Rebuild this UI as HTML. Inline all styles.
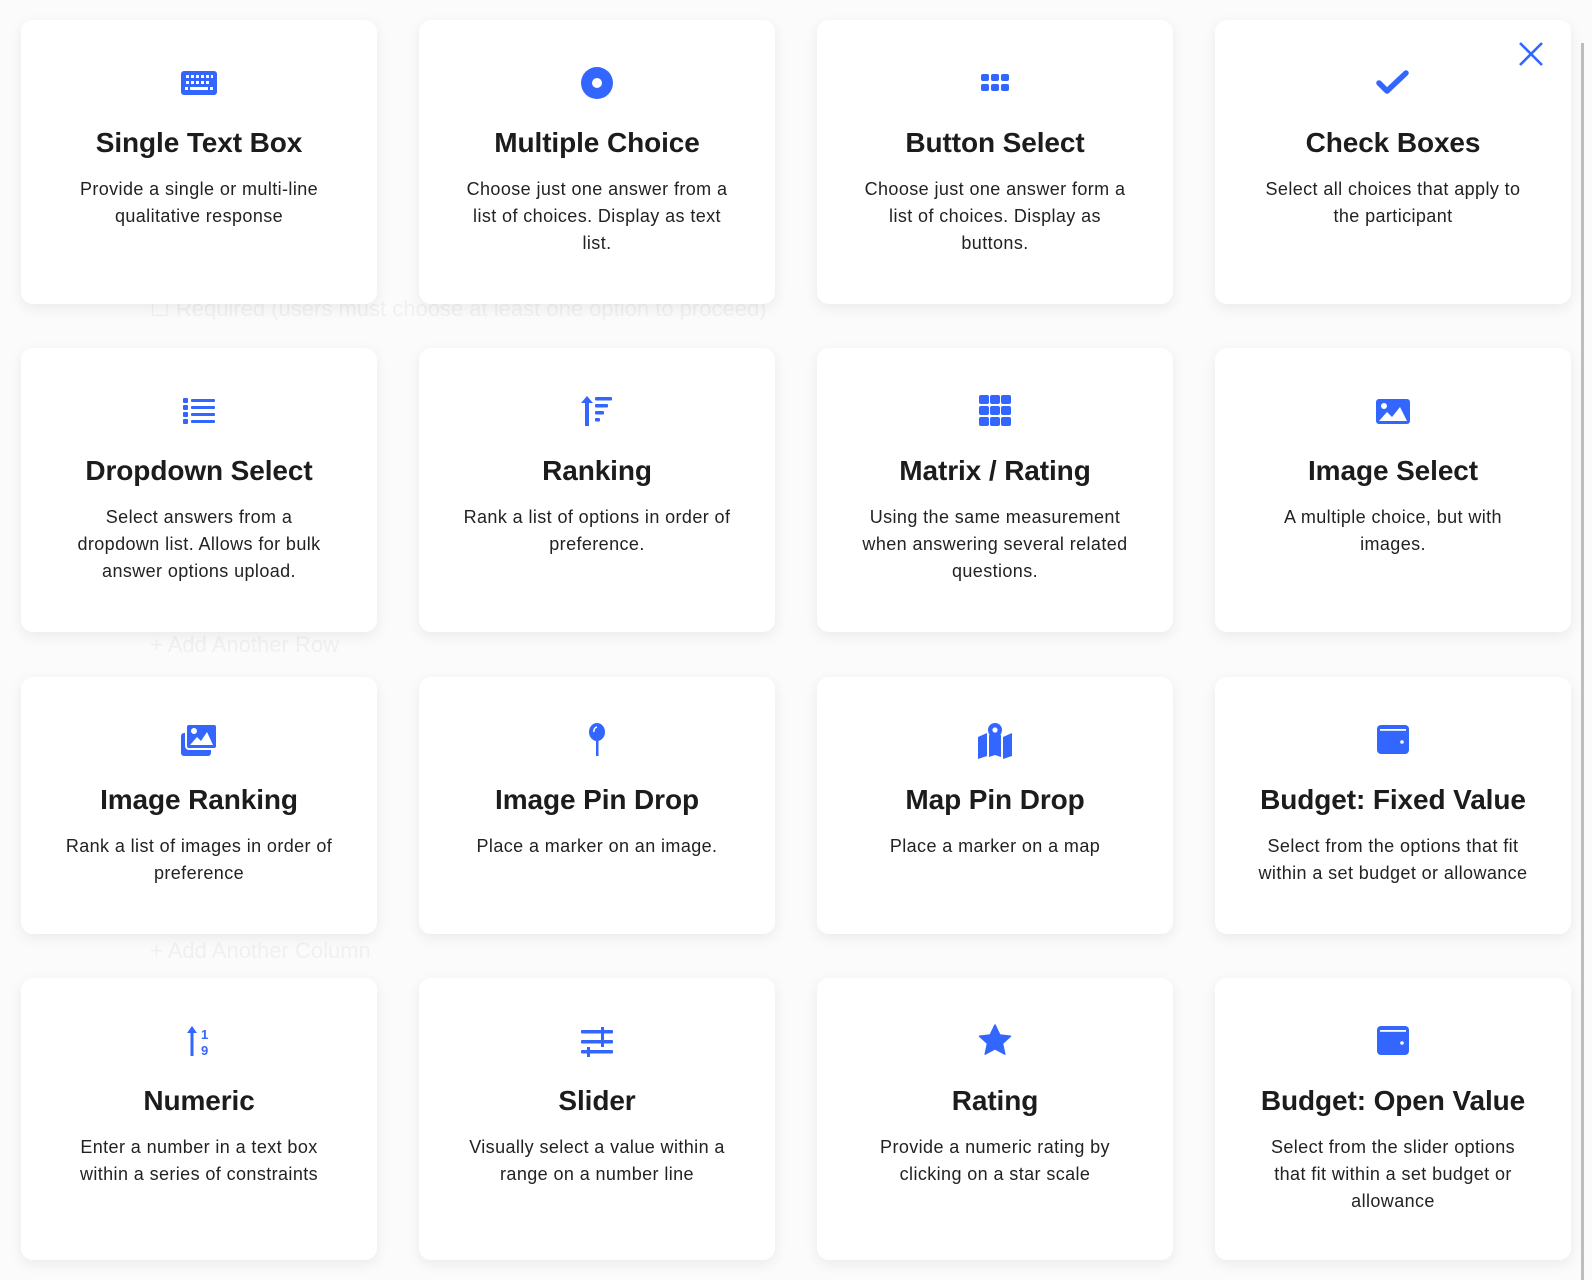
<!DOCTYPE html>
<html><head><meta charset="utf-8"><style>
html,body{margin:0;padding:0}
body{width:1592px;height:1280px;position:relative;overflow:hidden;background:#fbfbfb;font-family:"Liberation Sans",sans-serif;color:#1f1f1f}
.bg{position:absolute;color:#f0f0f0;font-size:22px}
.card{position:absolute;width:356px;background:#fff;border-radius:12px;box-shadow:0 4px 14px rgba(0,0,0,0.07);text-align:center}
.ic{position:absolute;left:0;right:0;top:44px;height:38px;display:flex;justify-content:center;align-items:center}
.ic svg{width:38px;height:38px}
.t{position:absolute;left:0;right:0;top:107px;font-size:28px;font-weight:700;letter-spacing:-0.1px;color:#1c1c1c}
.d{position:absolute;left:40px;right:40px;top:156px;font-size:18px;line-height:27px;color:#222;letter-spacing:0.4px}
.sb{position:absolute;left:1581px;top:43px;width:3px;height:1237px;background:#bdbdbd}
</style></head><body>
<div class="bg" style="left:150px;top:296px">☐ Required (users must choose at least one option to proceed)</div>
<div class="bg" style="left:150px;top:632px">+ Add Another Row</div>
<div class="bg" style="left:150px;top:938px">+ Add Another Column</div>
<div class="sb"></div>

<div class="card" style="left:21px;top:20px;height:284px">
<div class="ic"><svg viewBox="0 0 38 38"><rect x="1" y="7" width="36" height="24" rx="3" fill="#3366ff"/><g fill="#fff"><rect x="6" y="11" width="3" height="3"/><rect x="11" y="11" width="3" height="3"/><rect x="16" y="11" width="3" height="3"/><rect x="21" y="11" width="3" height="3"/><rect x="26" y="11" width="3" height="3"/><rect x="31" y="11" width="2" height="3"/><rect x="6" y="17" width="3" height="3"/><rect x="11" y="17" width="3" height="3"/><rect x="16" y="17" width="3" height="3"/><rect x="21" y="17" width="3" height="3"/><rect x="26" y="17" width="3" height="3"/><rect x="5" y="23" width="3" height="3"/><rect x="10" y="23" width="18" height="3"/><rect x="30" y="23" width="3" height="3"/></g></svg></div>
<div class="t">Single Text Box</div><div class="d">Provide a single or multi-line qualitative response</div></div>

<div class="card" style="left:419px;top:20px;height:284px">
<div class="ic"><svg viewBox="0 0 38 38"><circle cx="19" cy="19" r="16" fill="#3366ff"/><circle cx="19" cy="19" r="5" fill="#fff"/></svg></div>
<div class="t">Multiple Choice</div><div class="d">Choose just one answer from a<br>list of choices. Display as text<br>list.</div></div>

<div class="card" style="left:817px;top:20px;height:284px">
<div class="ic"><svg viewBox="0 0 38 38" fill="#3366ff"><rect x="5" y="10" width="8" height="7" rx="2"/><rect x="15" y="10" width="8" height="7" rx="2"/><rect x="25" y="10" width="8" height="7" rx="2"/><rect x="5" y="20" width="8" height="7" rx="2"/><rect x="15" y="20" width="8" height="7" rx="2"/><rect x="25" y="20" width="8" height="7" rx="2"/></svg></div>
<div class="t">Button Select</div><div class="d">Choose just one answer form a<br>list of choices. Display as<br>buttons.</div></div>

<div class="card" style="left:1215px;top:20px;height:284px">
<svg style="position:absolute;left:302px;top:20px" width="28" height="28" viewBox="0 0 28 28"><path d="M3 3L25 25M25 3L3 25" stroke="#3366ff" stroke-width="2.6"/></svg>
<div class="ic"><svg viewBox="0 0 38 38"><path d="M5 19l8 8L32 9" stroke="#3366ff" stroke-width="5.5" fill="none" stroke-linecap="round" stroke-linejoin="round"/></svg></div>
<div class="t">Check Boxes</div><div class="d">Select all choices that apply to<br>the participant</div></div>

<div class="card" style="left:21px;top:348px;height:284px">
<div class="ic"><svg viewBox="0 0 38 38" fill="#3366ff"><rect x="3" y="6" width="5" height="5" rx="1"/><rect x="11" y="7" width="24" height="3" rx="1"/><rect x="3" y="13" width="5" height="5" rx="1"/><rect x="11" y="14" width="24" height="3" rx="1"/><rect x="3" y="20" width="5" height="5" rx="1"/><rect x="11" y="21" width="24" height="3" rx="1"/><rect x="3" y="27" width="5" height="5" rx="1"/><rect x="11" y="28" width="24" height="3" rx="1"/></svg></div>
<div class="t">Dropdown Select</div><div class="d">Select answers from a<br>dropdown list. Allows for bulk<br>answer options upload.</div></div>

<div class="card" style="left:419px;top:348px;height:284px">
<div class="ic"><svg viewBox="0 0 38 38" fill="#3366ff"><path d="M9 4l-6 7h4v23h4V11h4z"/><rect x="17" y="5" width="17" height="3.5" rx="1"/><rect x="17" y="12" width="13" height="3.5" rx="1"/><rect x="17" y="19" width="9" height="3.5" rx="1"/><rect x="17" y="26" width="5" height="3.5" rx="1"/></svg></div>
<div class="t">Ranking</div><div class="d">Rank a list of options in order of<br>preference.</div></div>

<div class="card" style="left:817px;top:348px;height:284px">
<div class="ic"><svg viewBox="0 0 38 38" fill="#3366ff"><rect x="3" y="3" width="10" height="9" rx="2"/><rect x="14" y="3" width="10" height="9" rx="2"/><rect x="25" y="3" width="10" height="9" rx="2"/><rect x="3" y="14" width="10" height="9" rx="2"/><rect x="14" y="14" width="10" height="9" rx="2"/><rect x="25" y="14" width="10" height="9" rx="2"/><rect x="3" y="25" width="10" height="9" rx="2"/><rect x="14" y="25" width="10" height="9" rx="2"/><rect x="25" y="25" width="10" height="9" rx="2"/></svg></div>
<div class="t">Matrix / Rating</div><div class="d">Using the same measurement<br>when answering several related<br>questions.</div></div>

<div class="card" style="left:1215px;top:348px;height:284px">
<div class="ic"><svg viewBox="0 0 38 38"><rect x="2" y="7" width="34" height="25" rx="3" fill="#3366ff"/><circle cx="10" cy="14" r="3" fill="#fff"/><path d="M5 29l8-9 5 5 8-10 7 14z" fill="#fff"/></svg></div>
<div class="t">Image Select</div><div class="d">A multiple choice, but with<br>images.</div></div>

<div class="card" style="left:21px;top:677px;height:257px">
<div class="ic"><svg viewBox="0 0 38 38" fill="#3366ff"><rect x="1" y="12" width="30" height="23" rx="3"/><rect x="6" y="3" width="31" height="25" rx="3" stroke="#fff" stroke-width="2"/><circle cx="14" cy="10" r="3" fill="#fff"/><path d="M10 24l7-8 4 4 6-9 6 13z" fill="#fff"/></svg></div>
<div class="t">Image Ranking</div><div class="d">Rank a list of images in order of<br>preference</div></div>

<div class="card" style="left:419px;top:677px;height:257px">
<div class="ic"><svg viewBox="0 0 38 38"><ellipse cx="19" cy="11" rx="8" ry="9" fill="#3366ff"/><path d="M16 11a4 4 0 0 1 3-5" stroke="#fff" stroke-width="1.5" fill="none"/><rect x="18" y="19" width="2.5" height="16" fill="#3366ff"/></svg></div>
<div class="t">Image Pin Drop</div><div class="d">Place a marker on an image.</div></div>

<div class="card" style="left:817px;top:677px;height:257px">
<div class="ic"><svg viewBox="0 0 38 38" fill="#3366ff"><path d="M2 16l9-4v23l-9 3zM27 16l9-4v23l-9 3zM13 14l3 1 3 6 3-6 3-1v22l-6-2-6 2z"/><path d="M19 2a7 7 0 0 0-7 7c0 5 7 12 7 12s7-7 7-12a7 7 0 0 0-7-7z"/><circle cx="19" cy="9" r="2.6" fill="#fff"/></svg></div>
<div class="t">Map Pin Drop</div><div class="d">Place a marker on a map</div></div>

<div class="card" style="left:1215px;top:677px;height:257px">
<div class="ic"><svg viewBox="0 0 38 38"><rect x="3" y="4" width="32" height="29" rx="4" fill="#3366ff"/><rect x="6" y="8" width="26" height="1.8" fill="#fff"/><circle cx="28" cy="21" r="1.8" fill="#fff"/></svg></div>
<div class="t">Budget: Fixed Value</div><div class="d" style="left:20px;right:20px">Select from the options that fit<br>within a set budget or allowance</div></div>

<div class="card" style="left:21px;top:978px;height:282px">
<div class="ic"><svg viewBox="0 0 38 38" fill="#3366ff"><path d="M12 4l-5 7h3.5v23h3V11H17z"/><text x="21" y="17" font-size="13" font-weight="700" font-family="Liberation Sans">1</text><text x="21" y="33" font-size="13" font-weight="700" font-family="Liberation Sans">9</text></svg></div>
<div class="t">Numeric</div><div class="d">Enter a number in a text box<br>within a series of constraints</div></div>

<div class="card" style="left:419px;top:978px;height:282px">
<div class="ic"><svg viewBox="0 0 38 38" fill="#3366ff"><rect x="3" y="8" width="32" height="3.5" rx="1"/><rect x="3" y="18" width="32" height="3.5" rx="1"/><rect x="3" y="28" width="32" height="3.5" rx="1"/><rect x="23" y="5" width="3" height="10"/><rect x="23" y="15" width="3" height="10"/><rect x="9" y="25" width="3" height="10"/></svg></div>
<div class="t">Slider</div><div class="d">Visually select a value within a<br>range on a number line</div></div>

<div class="card" style="left:817px;top:978px;height:282px">
<div class="ic"><svg viewBox="0 0 38 38"><path d="M19 3l4.8 10 10.7 1.2-8 7.3 2.3 10.6L19 26.8 9.2 32.1l2.3-10.6-8-7.3L14.2 13z" fill="#3366ff" stroke="#3366ff" stroke-width="1.5" stroke-linejoin="round"/></svg></div>
<div class="t">Rating</div><div class="d">Provide a numeric rating by<br>clicking on a star scale</div></div>

<div class="card" style="left:1215px;top:978px;height:282px">
<div class="ic"><svg viewBox="0 0 38 38"><rect x="3" y="4" width="32" height="29" rx="4" fill="#3366ff"/><rect x="6" y="8" width="26" height="1.8" fill="#fff"/><circle cx="28" cy="21" r="1.8" fill="#fff"/></svg></div>
<div class="t">Budget: Open Value</div><div class="d">Select from the slider options<br>that fit within a set budget or<br>allowance</div></div>
</body></html>
